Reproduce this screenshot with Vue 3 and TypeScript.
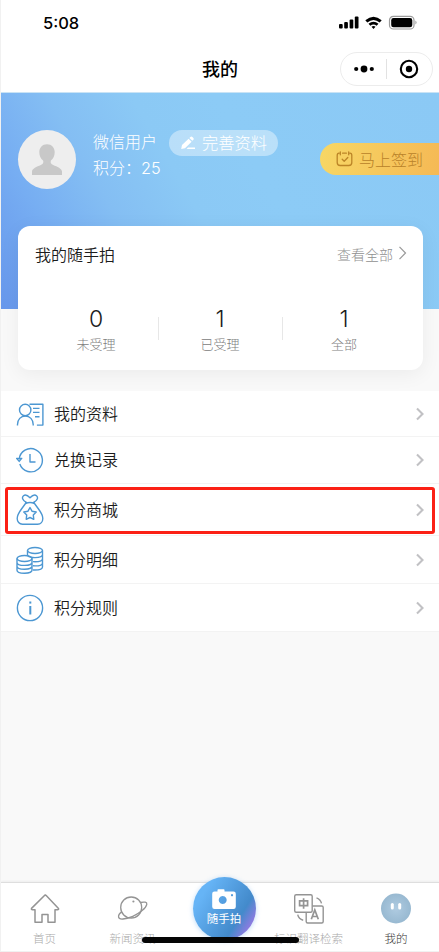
<script setup lang="ts">
interface Stat {
  value: number
  label: string
}
interface MenuItem {
  key: string
  label: string
  marked?: boolean
}

const stats: Stat[] = [
  { value: 0, label: '未受理' },
  { value: 1, label: '已受理' },
  { value: 1, label: '全部' },
]

const menu: MenuItem[] = [
  { key: 'profile', label: '我的资料' },
  { key: 'history', label: '兑换记录' },
  { key: 'mall', label: '积分商城', marked: true },
  { key: 'detail', label: '积分明细' },
  { key: 'rules', label: '积分规则' },
]
</script>

<template>
  <div class="page">
    <header class="top">
      <div class="status">
        <span class="time">5:08</span>
        <div class="signals">
          <svg width="80" height="16" viewBox="0 0 80 16">
            <rect x="0" y="9" width="3.700" height="4.6" rx="1" />
            <rect x="5.2" y="7" width="3.700" height="6.6" rx="1" />
            <rect x="10.6" y="4.5" width="3.700" height="9.1" rx="1" />
            <rect x="15.8" y="1.6" width="3.700" height="12" rx="1" />
            <path d="M26.300 5.2q8.2-7 16.400 0l-2 2.2q-6.2-5-12.400 0zM29.500 8.7q5-4 10 0l-1.900 2.1q-3.1-2.5-6.2 0zM32.500 11.7q2-1.5 4 0L34.500 14z" />
            <rect x="50.500" y="1.4" width="24.5" height="12.6" rx="3.8" fill="#fff" stroke="#9c9c9c" stroke-width="1.2" />
            <rect x="52.200" y="3.1" width="21.1" height="9.2" rx="2.3" />
            <path d="M76.500 5.5q2 2 0 4z" fill="#888" />
          </svg>
        </div>
      </div>
      <div class="navbar">
        <h1>我的</h1>
        <div class="capsule">
          <svg width="20" height="8" viewBox="0 0 20 8">
            <circle cx="2.2" cy="4" r="2.1" /><circle cx="10" cy="4" r="3.4" /><circle cx="17.8" cy="4" r="2.1" />
          </svg>
          <i></i>
          <svg width="20" height="20" viewBox="0 0 20 20">
            <circle cx="10" cy="10" r="8.2" fill="none" stroke="#000" stroke-width="2.1" /><circle cx="10" cy="10" r="3.2" />
          </svg>
        </div>
      </div>
    </header>

    <section class="hero">
      <div class="user">
        <div class="avatar">
          <svg width="32" height="32" viewBox="0 0 32 32">
            <path fill="#c8c8c8" d="M16 .3c-4.600 0-7.700 3.400-7.700 8 0 3.400 1.400 6.400 3.800 8.200.8 2.200-.2 3.500-2.300 4.400C5.800 22.700 1 24.500 1 27.600V31h30v-3.400c0-3.100-4.800-4.900-8.800-6.700-2.100-.9-3.100-2.200-2.300-4.400 2.400-1.800 3.800-4.800 3.800-8.200 0-4.600-3.100-8-7.700-8z" />
          </svg>
        </div>
        <div class="info">
          <div class="name-row">
            <span>微信用户</span>
            <button class="edit">
              <svg width="16" height="14" viewBox="0 0 16 14" fill="#fff">
                <path d="M1.200 13l.8-4L8.600 2.700l3 3L5 12.300zM9.400 1.900l1-1q1-.8 2 0l1 1q.8 1 0 1.900l-1 1zM8 11.600h7V13H6.600z" />
              </svg>
              完善资料
            </button>
          </div>
          <div class="points">积分：<b>25</b></div>
        </div>
      </div>
      <button class="sign">
        <svg width="17" height="16" viewBox="0 0 17 16" fill="none" stroke="#bc8527" stroke-width="1.300" stroke-linecap="round" stroke-linejoin="round">
          <path d="M3 2.200Q1.200 2.200 1.200 4.500v7q0 3 3 3h8.600q3 0 3-3v-7q0-2.300-1.800-2.300M6.600 2.200h3.800M4.300.8v3M12.700.8v3M6.200 8.200l2 2 3.600-3.700" />
        </svg>
        马上签到
      </button>
    </section>

    <section class="card">
      <div class="card-head">
        <h2>我的随手拍</h2>
        <span class="more">查看全部
          <svg width="9" height="14" viewBox="0 0 9 14" fill="none" stroke="#999" stroke-width="1.200"><path d="M1.500.8l6 6.200-6 6.200" /></svg>
        </span>
      </div>
      <div class="stats">
        <div v-for="s in stats" :key="s.label" class="stat">
          <strong>{{ s.value }}</strong>
          <span>{{ s.label }}</span>
        </div>
      </div>
    </section>

    <ul class="menu">
      <li v-for="m in menu" :key="m.key" :class="['row', m.key]">
        <svg v-if="m.key === 'profile'" class="ico" viewBox="0 0 28 28">
          <circle cx="9.200" cy="10" r="5.700" />
          <path d="M1.500 25.500v-1c0-5 3.300-8.500 7.800-8.500s7.900 3.500 7.900 8.500v1M13.500 4.300h13.400v20.800h-6M17 8.400h6.500M17 12.400h6.500M19 16.800h4.500" />
        </svg>
        <svg v-else-if="m.key === 'history'" class="ico" viewBox="0 0 28 28">
          <path d="M3.200 13.500A11.600 11.600 0 1 1 3.800 18M14 8v8h5.500M.6 12.400l2.600 3 2.500-3z" />
        </svg>
        <svg v-else-if="m.key === 'mall'" class="ico bag" viewBox="0 0 28 34">
          <path d="M10.500 9.500C6.500 7.500 5.500 4.500 7.500 2.700s4-.7 6.500 2c2.500-2.700 4.500-3.800 6.500-2s1 4.800-3 6.800M9.500 10.500q4.500-2 9 0l4 5.500c3 4 4.300 6.500 4.300 9.500 0 3-2 5.700-5.300 5.700h-15c-3.300 0-5.300-2.700-5.300-5.700 0-3 1.300-5.500 4.300-9.500z" />
          <path d="M14 14.500l2 3.700 4.200.8-2.900 3.100.5 4.200-3.800-1.800-3.800 1.800.5-4.200L7.800 19l4.200-.8z" />
        </svg>
        <svg v-else-if="m.key === 'detail'" class="ico" viewBox="0 0 28 28">
          <ellipse cx="19" cy="4.500" rx="7.500" ry="3" />
          <ellipse cx="8.500" cy="12.500" rx="7.500" ry="3" />
          <path d="M11.500 4.500v5M26.500 4.500v16.500c0 1.800-3.500 3-7.500 3h-2M26.500 8.600c0 1.800-3.500 3-7.500 3s-6-.8-7.200-1.900M26.500 12.700c0 1.800-3.500 3-7.500 3l-2-.1M26.500 16.900c0 1.800-3.500 3-7.500 3l-2-.1M1 12.500v11.700c0 1.700 3.400 3 7.500 3s7.500-1.300 7.500-3V12.500M1 16.400c0 1.700 3.400 3 7.500 3s7.500-1.300 7.500-3M1 20.300c0 1.700 3.400 3 7.500 3s7.500-1.300 7.500-3" />
        </svg>
        <svg v-else class="ico" viewBox="0 0 28 28">
          <circle cx="14" cy="14" r="12.600" />
          <path d="M14.300 12v8.500" stroke-width="2" /><path d="M14.300 7.500v2.100" stroke-width="2" />
        </svg>
        <span class="label">{{ m.label }}</span>
        <svg class="chev" width="9" height="14" viewBox="0 0 9 14"><path d="M1 1.500L6.500 7 1 12.500" fill="none" stroke="#c1c1c4" stroke-width="2.100" /></svg>
        <div v-if="m.marked" class="mark"></div>
      </li>
    </ul>

    <nav class="tabs">
      <a class="tab">
        <svg width="32" height="32" viewBox="0 0 32 32" fill="none" stroke="#949494" stroke-width="1.500" stroke-linejoin="round">
          <path d="M16 2L2.500 15.400q-.5 1.300 1 1.300H6v12.500h7v-7.700h6v7.700h7V16.700h2.500q1.500 0 1-1.300L17.200 2.600Q16 1.600 16 2z" />
        </svg>
        <span>首页</span>
      </a>
      <a class="tab">
        <svg width="32" height="32" viewBox="0 0 32 32" fill="none" stroke="#949494" stroke-width="1.300">
          <circle cx="14.200" cy="14.500" r="10.500" />
          <path d="M23.300 9.500c4.200-1 6.900-.3 6.500 1.800-.8 3.800-7 9-14 12C8 26.500 2 27 1.600 24.200c-.3-1.600 1-4 3.400-5.600" /><circle cx="16.400" cy="8.500" r="1.100" fill="#949494" stroke="none" />
        </svg>
        <span>新闻资讯</span>
      </a>
      <a class="tab center">
        <span class="snap">
          <svg width="24" height="21" viewBox="0 0 24 21">
            <path fill="#fff" fill-rule="evenodd" d="M2.500 2.500H5.500V1q0-.8.8-.8h5.400q.8 0 .8.8v1.500h9q2.300 0 2.300 2.300v12.900q0 2.300-2.300 2.300h-19Q.2 20 .2 17.700V4.800q0-2.300 2.300-2.300zM10.700 7a4 4 0 1 0 .01 0zM20 5a1.100 1.100 0 1 0 .01 0z" />
          </svg>
          <em>随手拍</em>
        </span>
      </a>
      <a class="tab">
        <svg width="32" height="32" viewBox="0 0 32 32" fill="none" stroke="#949494" stroke-width="1.400">
          <rect x="1.700" y="1.700" width="17.500" height="17.500" rx="1.500" />
          <path d="M19.200 13h9.500q1.500 0 1.500 1.500v14q0 1.500-1.500 1.500h-14q-1.500 0-1.500-1.500V19.200M23.500 4.800q4 1.500 5 5.500M4.700 21.700q1 4.500 5.500 5.500" />
          <path d="M6.600 7.800h8v4.800h-8zM10.600 5.200v10.500M18.300 26.300l3.500-9.300 3.500 9.300M19.600 23.500h4.500" stroke-width="1.700" />
        </svg>
        <span>标识翻译检索</span>
      </a>
      <a class="tab active">
        <svg width="32" height="32" viewBox="0 0 32 32">
          <defs><radialGradient id="face"><stop offset="0" stop-color="#afcbe1" /><stop offset="1" stop-color="#98b9d1" /></radialGradient></defs>
          <circle cx="16" cy="15.500" r="15" fill="url(#face)" /><rect x="10.800" y="10" width="3" height="6.500" rx="1.500" fill="#fff" /><rect x="18.200" y="10" width="3" height="6.500" rx="1.500" fill="#fff" />
        </svg>
        <span>我的</span>
      </a>
      <div class="home-bar"></div>
    </nav>
  </div>
</template>

<style>
body {
  margin: 0;
  background: #f9f9f9;
}
</style>

<style scoped>
* {
  box-sizing: border-box;
}
.page {
  display: flex;
  flex-direction: column;
  height: 952px;
  border-left: 1px solid #f1f1f1;
  border-bottom: 1px solid #f1f1f1;
  background: #f9f9f9;
  font-family: Inter, "Noto Sans CJK SC", sans-serif;
  font-weight: 300;
  color: #1c1c1c;
  overflow: hidden;
}
svg {
  display: block;
  flex: none;
}
button {
  border: 0;
  font: inherit;
  padding: 0;
}
h1, h2 {
  margin: 0;
}
.top {
  height: 93px;
  flex: none;
  background: #fff;
  border-bottom: 1px solid #c9e3f5;
}
.status {
  display: flex;
  justify-content: space-between;
  align-items: center;
  height: 46px;
  padding: 0 20px 0 42px;
}
.time {
  font-size: 16.500px;
  font-weight: 550;
  color: #000;
}
.navbar {
  display: flex;
  justify-content: flex-end;
  align-items: center;
  height: 46px;
  padding-right: 6px;
  gap: 102px;
}
h1 {
  font-size: 18px;
  font-weight: 500;
  line-height: 26px;
  padding-top: 2px;
  color: #000;
}
.capsule {
  width: 93px;
  height: 34px;
  border: 1px solid #ececec;
  border-radius: 17px;
  display: flex;
  align-items: center;
  justify-content: space-between;
  padding: 0 13px;
}
.capsule i {
  width: 1px;
  height: 20px;
  background: #e2e2e2;
}
.hero {
  height: 216px;
  flex: none;
  display: flex;
  justify-content: space-between;
  align-items: flex-start;
  padding: 37px 0 0 17px;
  background: linear-gradient(60deg, #6797ec 0%, #76adf2 16%, #84bef3 30%, #8bc9f5 45%, #8ccbf6 60%, #8bc9f5 100%);
}
.user {
  display: flex;
  gap: 17px;
  color: #fff;
  font-size: 16px;
}
.avatar {
  width: 58px;
  height: 59px;
  border-radius: 50%;
  background: #eee;
  display: flex;
  align-items: center;
  justify-content: center;
}
.name-row {
  display: flex;
  align-items: center;
  height: 26px;
  gap: 12px;
  line-height: 24px;
}
.name-row > span {
  padding-bottom: 2px;
}
.edit {
  display: flex;
  align-items: center;
  gap: 6px;
  width: 109px;
  height: 26px;
  padding-left: 11px;
  border-radius: 13px;
  background: rgba(255, 255, 255, .4);
  color: #fff;
  font-size: 16.300px;
  white-space: nowrap;
}
.points {
  line-height: 24px;
}
.points b {
  font-weight: 350;
  font-size: 16.300px;
}
.sign {
  display: flex;
  align-items: center;
  gap: 6px;
  width: 119px;
  height: 32px;
  margin-top: 13px;
  padding-left: 16px;
  border-radius: 16px 0 0 16px;
  background: linear-gradient(100deg, #f7d765, #f5b955);
  color: #b98229;
  font-size: 16px;
  white-space: nowrap;
}
.card {
  height: 144px;
  flex: none;
  margin: -83px 16px 21px 17px;
  border-radius: 12px;
  background: #fff;
  box-shadow: 0 4px 20px rgba(0, 0, 0, .06);
}
.card-head {
  display: flex;
  justify-content: space-between;
  padding: 17px 16px 0 17px;
  line-height: 24px;
}
h2 {
  font-size: 16px;
  font-weight: 350;
}
.more {
  display: flex;
  align-items: center;
  gap: 5px;
  font-size: 14px;
  color: #909090;
}
.more svg {
  margin-top: -4px;
}
.stats {
  display: grid;
  grid-template-columns: repeat(3, 124px);
  padding: 37px 0 0 16px;
}
.stat {
  display: flex;
  flex-direction: column;
  align-items: center;
  position: relative;
}
.stat + .stat::before {
  content: "";
  position: absolute;
  left: 0;
  top: 13px;
  width: 1px;
  height: 23px;
  background: #e7e7e7;
}
.stat strong {
  font-size: 23px;
  line-height: 30px;
  font-weight: 350;
}
.stat span {
  font-size: 13px;
  line-height: 20px;
  color: #808080;
}
.menu {
  margin: 0;
  padding: 0;
  list-style: none;
}
.row {
  position: relative;
  display: flex;
  align-items: center;
  height: 48px;
  padding: 0 14px 0 15px;
  border-bottom: 1px solid #f3f3f3;
  background: #fff;
  font-size: 16px;
  font-weight: 350;
}
.row.profile {
  height: 46px;
}
.row.history {
  height: 47px;
}
.row.mall {
  height: 52px;
}
.ico {
  width: 28px;
  height: 28px;
  fill: none;
  stroke: #4c97d2;
  stroke-width: 1.400;
  stroke-linejoin: round;
}
.ico.bag {
  height: 34px;
}
.label {
  flex: 1;
  margin-left: 10px;
  padding-bottom: 2px;
}
.mark {
  position: absolute;
  inset: 3px 4px 1px;
  border: 3px solid #fb2015;
  border-radius: 3px;
}
.tabs {
  position: relative;
  display: grid;
  grid-template-columns: repeat(5, 88px);
  height: 69px;
  margin-top: auto;
  flex: none;
  border-top: 1px solid #dedede;
  background: #fff;
  box-shadow: 0 -1px 2px rgba(0, 0, 0, .05);
}
.tab {
  display: flex;
  flex-direction: column;
  align-items: center;
  padding: 10px 1px 0 0;
  font-size: 11.500px;
  line-height: 18px;
  color: #aaa;
  white-space: nowrap;
}
.tab > span {
  margin-top: 5px;
}
.tab.active {
  padding-right: 2px;
}
.tab.active > span {
  color: #333;
}
.tab.center {
  padding: 0 0 0 6px;
}
.tab .snap {
  display: flex;
  flex-direction: column;
  align-items: center;
  width: 63px;
  height: 63px;
  margin-top: -6px;
  padding-top: 12px;
  border-radius: 50%;
  background: linear-gradient(122deg, #66b4f6 20%, #438acb 70%, #a477e7 91%);
  box-shadow: 0 1px 5px rgba(92, 168, 239, .4);
  color: #fff;
}
.snap em {
  font-style: normal;
  font-weight: 400;
  line-height: 18px;
}
.home-bar {
  position: absolute;
  left: 141px;
  bottom: 8px;
  width: 157px;
  height: 6px;
  border-radius: 3px;
  background: #050505;
}
</style>
